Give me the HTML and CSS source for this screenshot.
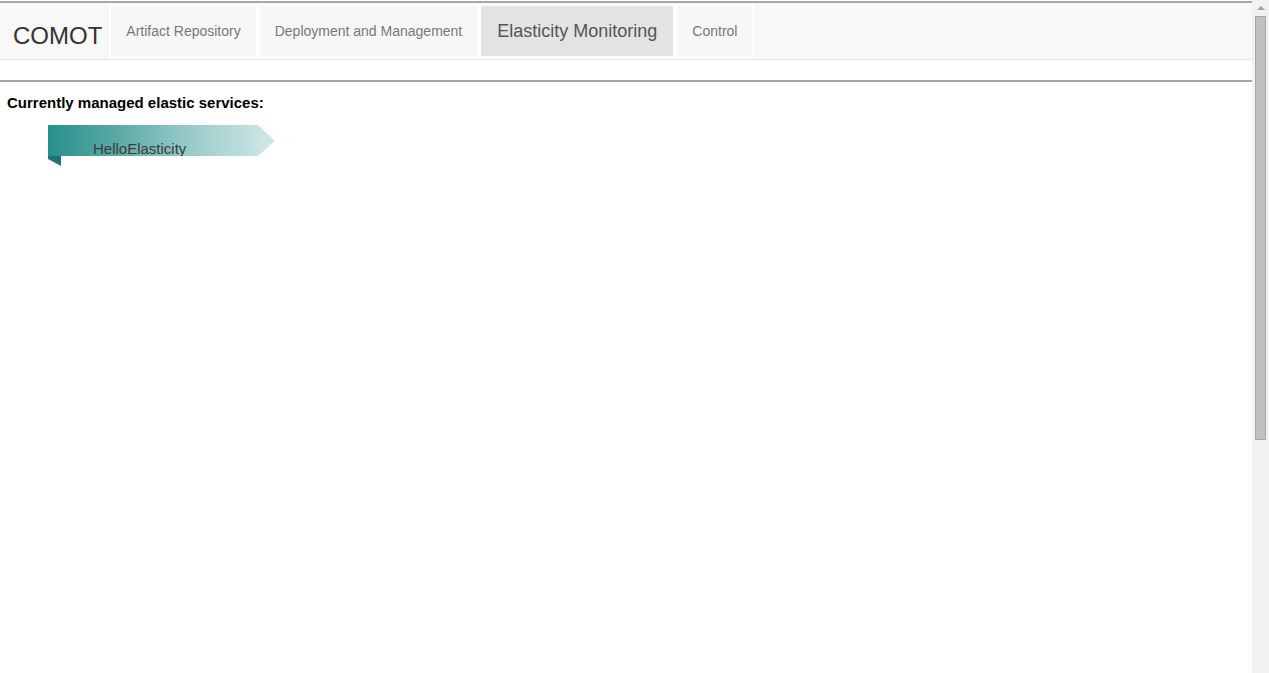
FILE: index.html
```html
<!DOCTYPE html>
<html lang="en">
<head>
<meta charset="utf-8">
<title>COMOT</title>
<link rel="stylesheet" href="styles.css">
</head>
<body>
<div class="window">
  <div class="page">
    <header class="navbar">
      <div class="brand">COMOT</div>
      <ul class="tabs">
        <li class="tab">Artifact Repository</li>
        <li class="tab">Deployment and Management</li>
        <li class="tab tab-active">Elasticity Monitoring</li>
        <li class="tab">Control</li>
      </ul>
    </header>
    <main class="content">
      <h2 class="heading">Currently managed elastic services:</h2>
      <div class="service">
        <div class="ribbon"><span class="ribbon-text">HelloElasticity</span></div>
        <div class="fold"></div>
      </div>
    </main>
  </div>
  <div class="scrollbar">
    <div class="sb-up"><div class="sb-arrow"></div></div>
    <div class="sb-thumb"></div>
  </div>
</div>
</body>
</html>
```

FILE: styles.css
```css
html, body {
  margin: 0;
  padding: 0;
  overflow: hidden;
}
body {
  font-family: "Liberation Sans", Arial, sans-serif;
  background: #fff;
}
.window {
  display: flex;
  height: 673px;
}
.page {
  flex: 1;
  min-width: 0;
}
.scrollbar {
  width: 17px;
  flex: none;
  background: #f1f1f1;
  display: flex;
  flex-direction: column;
  align-items: center;
}
.sb-up {
  height: 16px;
  width: 17px;
  display: flex;
  justify-content: center;
  align-items: center;
}
.sb-arrow {
  width: 0;
  height: 0;
  border-left: 4px solid transparent;
  border-right: 4px solid transparent;
  border-bottom: 4px solid #a3a3a3;
}
.sb-thumb {
  box-sizing: border-box;
  width: 11px;
  height: 424px;
  background: #c1c1c1;
  border: 1px solid #a8a8a8;
}
.navbar {
  margin-top: 1px;
  border-top: 2px solid #a9a9a9;
  border-bottom: 1px solid #e7e7e7;
  background: #f8f8f8;
  height: 56px;
  display: flex;
  align-items: flex-start;
}
.brand {
  font-size: 24px;
  line-height: 24px;
  color: #333;
  padding: 21px 7px 0 13px;
}
.tabs {
  list-style: none;
  margin: 1px 0 0 0;
  padding: 0;
  display: flex;
}
.tab {
  box-sizing: border-box;
  height: 54px;
  border: 2px solid #fff;
  background: #f7f7f7;
  padding: 0 15px;
  display: flex;
  align-items: center;
  font-size: 14px;
  color: #777;
}
.tab-active {
  background: #e3e3e3;
  font-size: 18px;
  color: #555;
  padding: 0 16px;
}
.content {
  margin-top: 20px;
  border-top: 2px solid #a3a3a3;
  padding: 0 7px;
}
.heading {
  margin: 12px 0 14px 0;
  font-size: 15px;
  line-height: 17px;
  font-weight: bold;
  color: #000;
}
.service {
  margin-left: 41px;
  width: 227px;
}
.ribbon {
  height: 31px;
  box-sizing: border-box;
  padding: 15px 0 0 45px;
  background: linear-gradient(to right, #27908b 0%, #5aa9a6 30%, #9ccdcb 65%, #d2e9e9 100%);
  clip-path: polygon(0 0, 210px 0, 227px 16px, 210px 31px, 0 31px);
}
.ribbon-text {
  display: block;
  font-size: 15px;
  line-height: 17px;
  color: #3c3c3c;
}
.fold {
  width: 13px;
  height: 11px;
  background: #1c7773;
  clip-path: polygon(0 0, 13px 0, 13px 10px, 0 3px);
}
```
